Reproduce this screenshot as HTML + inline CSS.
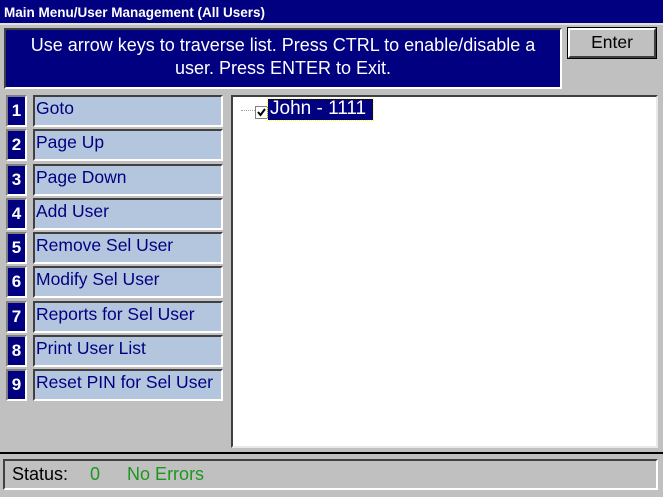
<!DOCTYPE html>
<html><head><style>
*{margin:0;padding:0;box-sizing:border-box}
body{width:663px;height:497px;background:#c0c0c0;position:relative;overflow:hidden;font-family:"Liberation Sans",sans-serif}
.abs{position:absolute}
#title{left:0;top:0;width:663px;height:25px;background:#000080;color:#fff;font-size:13.5px;font-weight:bold;padding:5px 0 0 4px;border-bottom:2px solid #e0e0e0;white-space:nowrap}
#instr{left:4px;top:28px;width:558px;height:61px;background:#000080;border:2px solid;border-color:#404040 #fff #fff #404040;color:#fff;font-size:18px;text-align:center;line-height:23px;padding-top:4px;white-space:nowrap}
#enter{left:568px;top:28px;width:88px;height:30px;background:#c0c0c0;border:2px solid;border-color:#fff #404040 #404040 #fff;outline:1px solid #000;font-size:17.5px;text-align:center;line-height:25px;color:#000}
.num{left:6px;width:21px;height:32px;background:#000080;border:2px solid;border-color:#808080 #fff #fff #808080;color:#fff;font-weight:bold;font-size:17px;text-align:center;line-height:28px}
.lab{left:33px;width:190px;height:32px;background:#b4c6de;border:2px solid;border-color:#404040 #fff #fff #404040;color:#000080;font-size:17.5px;line-height:23px;padding-left:1px;white-space:nowrap}
#list{left:231px;top:95px;width:427px;height:353px;background:#fff;border:2px solid;border-color:#404040 #e8e8e8 #e8e8e8 #404040}
#sep{left:0;top:452px;width:663px;height:2px;background:#000}
#status{left:3px;top:459px;width:655px;height:31px;border:2px solid;border-color:#404040 #fff #fff #404040;font-size:18px;line-height:27px;padding-left:7px;white-space:nowrap}
</style></head><body>
<div id="title" class="abs">Main Menu/User Management (All Users)</div>
<div id="instr" class="abs">Use arrow keys to traverse list. Press CTRL to enable/disable a<br>user. Press ENTER to Exit.</div>
<div id="enter" class="abs">Enter</div>

<div class="abs num" style="top:95px">1</div><div class="abs lab" style="top:95px">Goto</div>
<div class="abs num" style="top:129px">2</div><div class="abs lab" style="top:129px">Page Up</div>
<div class="abs num" style="top:164px">3</div><div class="abs lab" style="top:164px">Page Down</div>
<div class="abs num" style="top:198px">4</div><div class="abs lab" style="top:198px">Add User</div>
<div class="abs num" style="top:232px">5</div><div class="abs lab" style="top:232px">Remove Sel User</div>
<div class="abs num" style="top:266px">6</div><div class="abs lab" style="top:266px">Modify Sel User</div>
<div class="abs num" style="top:301px">7</div><div class="abs lab" style="top:301px">Reports for Sel User</div>
<div class="abs num" style="top:335px">8</div><div class="abs lab" style="top:335px">Print User List</div>
<div class="abs num" style="top:369px">9</div><div class="abs lab" style="top:369px">Reset PIN for Sel User</div>

<div id="list" class="abs">
  <div class="abs" style="left:8px;top:13px;width:14px;border-top:1px dotted #a0a0a0"></div>
  <div class="abs" style="left:22px;top:9px;width:13px;height:13px;border:1px solid #808080;background:#fff">
    <svg width="11" height="11" style="position:absolute;left:0;top:0"><path d="M2 5 L4.5 8 L9 2" stroke="#000" stroke-width="2" fill="none"/></svg>
  </div>
  <div class="abs" style="left:35px;top:2px;width:105px;height:21px;background:#000080;color:#fff;font-size:19px;line-height:20px;padding-left:2px;outline:1px dotted #ff0;white-space:nowrap">John - 1111</div>
</div>

<div id="sep" class="abs"></div>
<div id="status" class="abs"><span style="color:#000">Status:</span><span style="color:#1e961e;margin-left:22px">0</span><span style="color:#1e961e;margin-left:27px">No Errors</span></div>
</body></html>
